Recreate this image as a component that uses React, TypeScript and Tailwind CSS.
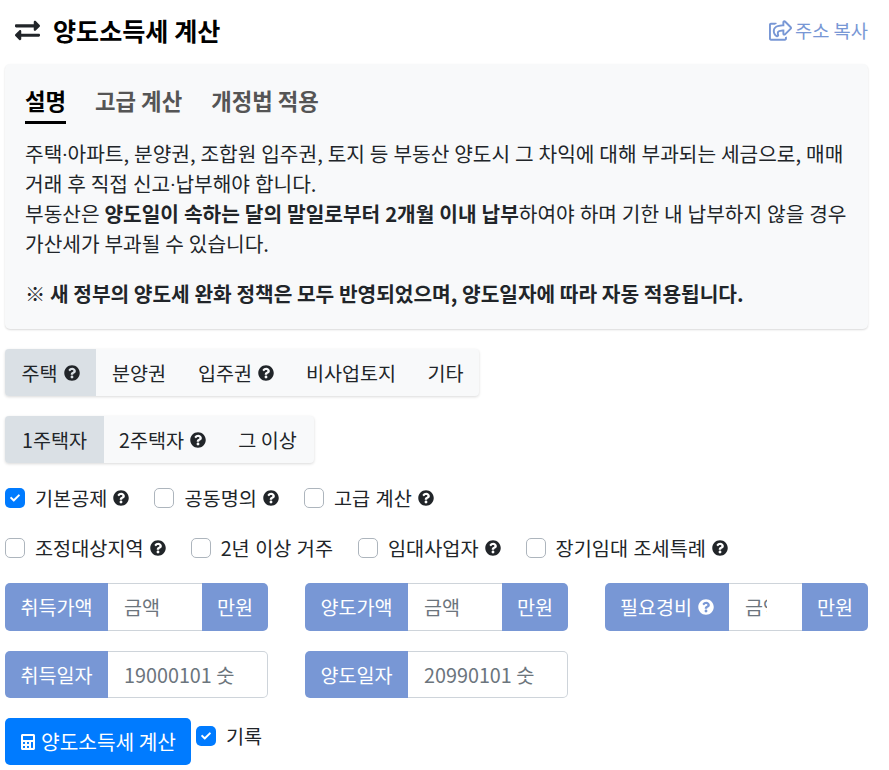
import { FaExchangeAlt, FaQuestionCircle, FaRegShareSquare, FaCalculator, FaCheck } from "react-icons/fa";

const font = { fontFamily: '"Noto Sans CJK KR", sans-serif' };

function Q({ white }: { white?: boolean }) {
  return <FaQuestionCircle className={white ? "inline w-4 h-4 text-white" : "inline w-4 h-4 text-[#212529]"} />;
}

function Dot() {
  return <span className="font-[Roboto] leading-[0]">·</span>;
}

function Check({ on, label, q }: { on?: boolean; label: string; q?: boolean }) {
  return (
    <label className="flex items-center">
      <span className={on ? "w-5 h-5 rounded-[5px] bg-[#007bff] flex items-center justify-center" : "w-5 h-5 rounded-[5px] bg-white border border-[#adb5bd]"}>
        {on && <FaCheck className="w-[10px] h-[10px] text-white" />}
      </span>
      <span className="ml-[10px] flex items-center gap-[6px] text-[19.7px] [word-spacing:1px] text-[#212529]">
        {label}
        {q && <Q />}
      </span>
    </label>
  );
}

function Seg({ items, active }: { items: { t: string; q?: boolean; w: number }[]; active: number }) {
  return (
    <div className="flex w-fit h-[47px] rounded-[4px] bg-[#f8f9fa] shadow-[0_1px_3px_rgba(0,0,0,0.15)] overflow-hidden text-[19.6px]">
      {items.map((it, i) => (
        <div
          key={it.t}
          style={{ width: it.w }}
          className={i === active ? "flex items-center justify-center gap-[6px] bg-[#dae0e5] text-[#212529]" : "flex items-center justify-center gap-[6px] text-[#212529]"}
        >
          {it.t}
          {it.q && <Q />}
        </div>
      ))}
    </div>
  );
}

function Label({ children, w, last }: { children: React.ReactNode; w: number; last?: boolean }) {
  return (
    <div
      style={{ width: w }}
      className={
        last
          ? "flex items-center justify-center gap-[6px] bg-[#7897d5] text-white rounded-r-[5px] text-[19.6px]"
          : "flex items-center justify-center gap-[6px] bg-[#7897d5] text-white rounded-l-[5px] text-[19.6px]"
      }
    >
      {children}
    </div>
  );
}

function Money({ label, q, lw, iw }: { label: string; q?: boolean; lw: number; iw: number }) {
  return (
    <div className="flex h-[48px] w-[263px]">
      <Label w={lw}>
        {label}
        {q && <Q white />}
      </Label>
      <div style={{ width: iw }} className="border-y border-[#ced4da] pl-[16px] pr-[35px] text-[19.6px] text-[#6c757d] flex items-center whitespace-nowrap bg-white">
        <span className="overflow-hidden w-full">금액</span>
      </div>
      <Label w={66} last>
        만원
      </Label>
    </div>
  );
}

function DateBox({ label, ph }: { label: string; ph: string }) {
  return (
    <div className="flex h-[47px] w-[263px]">
      <Label w={103}>{label}</Label>
      <div className="flex-1 border border-l-0 border-[#ced4da] rounded-r-[5px] pl-[16px] text-[19.8px] text-[#6c757d] flex items-center bg-white">{ph}</div>
    </div>
  );
}

export default function App() {
  return (
    <div style={font} className="w-[889px] h-[770px] overflow-hidden bg-white pl-[5px] pr-[21px] text-[20.25px] leading-[30px] text-[#212529]">
      <div className="flex items-center justify-between h-[64px] pb-[4px] pl-[10px]">
        <div className="flex items-center gap-[13px]">
          <FaExchangeAlt className="w-[25px] h-[25px] text-[#212529]" />
          <h1 className="text-[25.1px] font-bold text-black">양도소득세 계산</h1>
        </div>
        <div className="flex items-center gap-[3px] text-[18.7px] text-[#7897d5]">
          <FaRegShareSquare className="w-[23px] h-[23px]" />
          주소 복사
        </div>
      </div>

      <div className="h-[265px] rounded-[5px] bg-[#f8f9fa] shadow-[0_1px_2px_rgba(0,0,0,0.15)] px-[20px]">
        <div className="flex gap-[29px] pt-[21px] h-[60px] text-[22.3px] font-bold text-[#555]">
          <div className="text-black border-b-[3px] border-black h-[39px]">설명</div>
          <div>고급 계산</div>
          <div>개정법 적용</div>
        </div>
        <div className="pt-[15px]">
          <p className="[word-spacing:0.38px]">
            주택
            <Dot />
            아파트, 분양권, 조합원 입주권, 토지 등 부동산 양도시 그 차익에 대해 부과되는 세금으로, 매매
            <br />
            거래 후 직접 신고
            <Dot />
            납부해야 합니다.
            <br />
            부동산은 <b>양도일이 속하는 달의 말일로부터 2개월 이내 납부</b>하여야 하며 기한 내 납부하지 않을 경우
            <br />
            가산세가 부과될 수 있습니다.
          </p>
          <p className="mt-[20px] font-bold [word-spacing:0.1px]">※ 새 정부의 양도세 완화 정책은 모두 반영되었으며, 양도일자에 따라 자동 적용됩니다.</p>
        </div>
      </div>

      <div className="mt-[20px]">
        <Seg active={0} items={[{ t: "주택", q: true, w: 91 }, { t: "분양권", w: 86 }, { t: "입주권", q: true, w: 108 }, { t: "비사업토지", w: 122 }, { t: "기타", w: 67 }]} />
      </div>
      <div className="mt-[20px]">
        <Seg active={0} items={[{ t: "1주택자", w: 99 }, { t: "2주택자", q: true, w: 117 }, { t: "그 이상", w: 93 }]} />
      </div>

      <div className="mt-[20px] flex h-[30px] gap-[25px]">
        <Check on label="기본공제" q />
        <Check label="공동명의" q />
        <Check label="고급 계산" q />
      </div>
      <div className="mt-[20px] flex h-[30px] gap-[25px]">
        <Check label="조정대상지역" q />
        <Check label="2년 이상 거주" />
        <Check label="임대사업자" q />
        <Check label="장기임대 조세특례" q />
      </div>

      <div className="mt-[20px] flex gap-[37px]">
        <Money label="취득가액" lw={103} iw={94} />
        <Money label="양도가액" lw={103} iw={94} />
        <Money label="필요경비" q lw={124} iw={73} />
      </div>
      <div className="mt-[20px] flex gap-[37px]">
        <DateBox label="취득일자" ph="19000101 숫" />
        <DateBox label="양도일자" ph="20990101 숫" />
      </div>
      <div className="mt-[20px] flex items-start">
        <div className="h-[47px] w-[186px] rounded-[5px] bg-[#007bff] text-white flex items-center justify-center gap-[5px]">
          <FaCalculator className="w-4 h-4" />
          양도소득세 계산
        </div>
        <div className="ml-[5px] mt-[3px]">
          <Check on label="기록" />
        </div>
      </div>
    </div>
  );
}
